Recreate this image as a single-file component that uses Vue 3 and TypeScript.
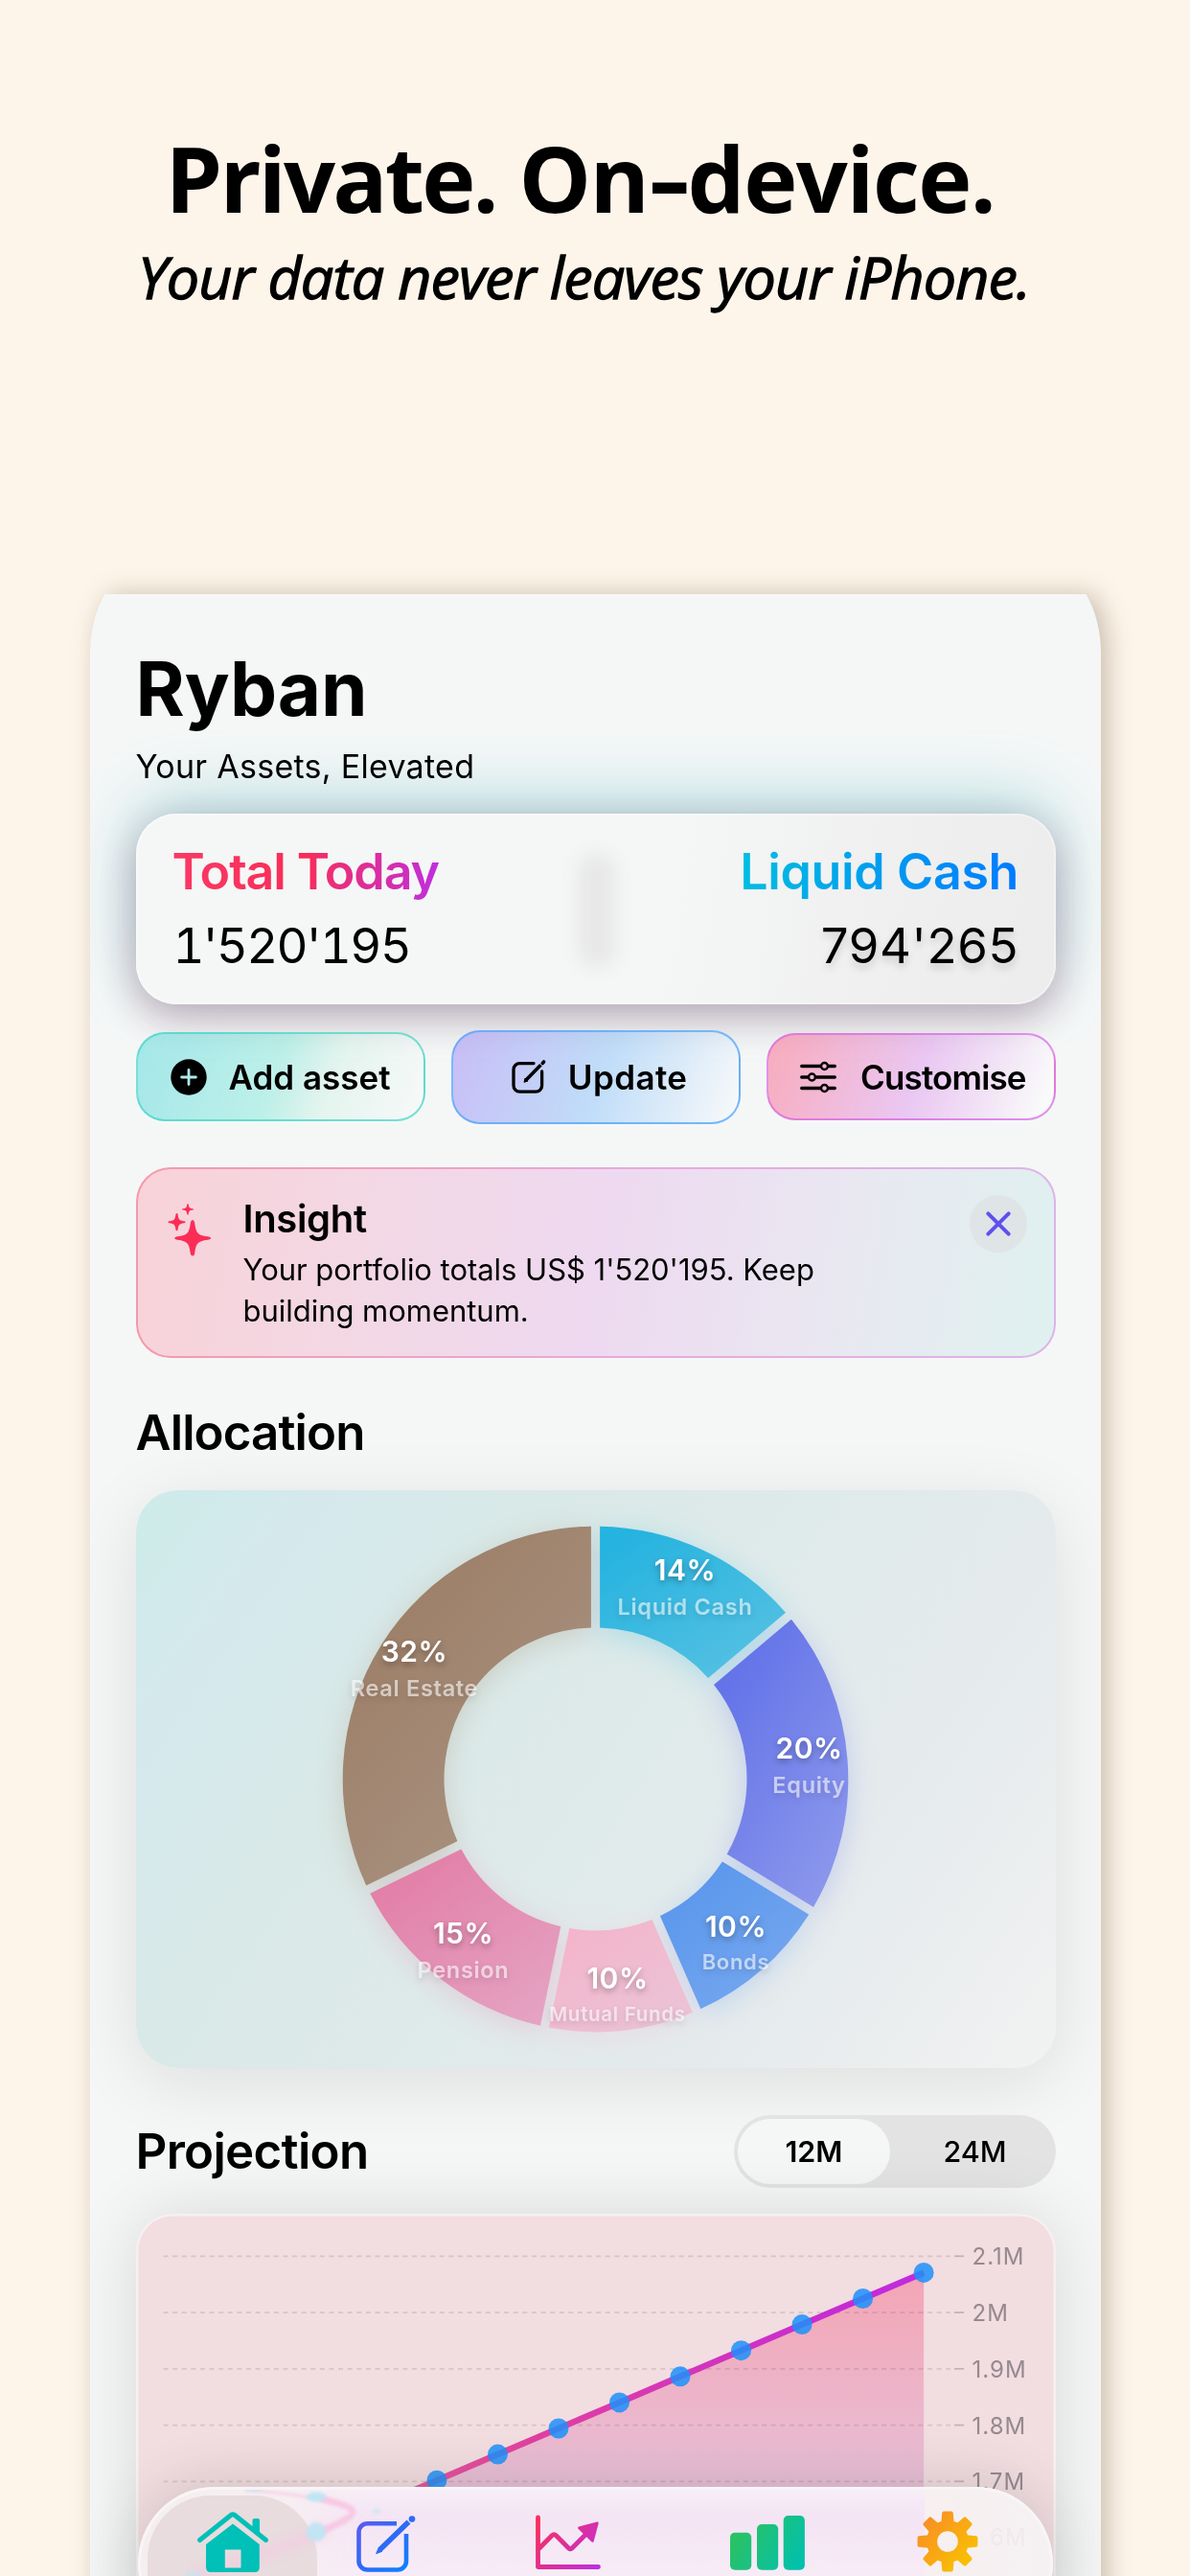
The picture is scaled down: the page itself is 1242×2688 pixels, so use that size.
<script setup lang="ts">
interface Slice {
  name: string
  percent: string
  start: number
  end: number
  from: string
  to: string
  x: number
  y: number
  size: number
}

const slices: Slice[] = [
  { name: 'Liquid Cash', percent: '14%', start: 0, end: 49.8, from: '#25b3df', to: '#56c1e3', x: 573, y: 94, size: 23.5 },
  { name: 'Equity', percent: '20%', start: 49.8, end: 121.4, from: '#6070e8', to: '#8c98ec', x: 702.5, y: 279.5, size: 23.5 },
  { name: 'Bonds', percent: '10%', start: 121.4, end: 156.4, from: '#5896ec', to: '#78a8ef', x: 626, y: 466, size: 22 },
  { name: 'Mutual Funds', percent: '10%', start: 156.4, end: 191.6, from: '#f4b4ca', to: '#ebc3d6', x: 502.5, y: 520, size: 20.5 },
  { name: 'Pension', percent: '15%', start: 191.6, end: 244.1, from: '#e27da6', to: '#e5a2c2', x: 341.5, y: 472.5, size: 23.5 },
  { name: 'Real Estate', percent: '32%', start: 244.1, end: 360, from: '#9b7c64', to: '#aa9584', x: 290.5, y: 178.5, size: 23.5 },
]

const CX = 479.5
const CY = 301.4
const OUTER = 263.8
const INNER = 158
const HALF_GAP = 4.6

function point(radius: number, angle: number): string {
  return `${(CX + radius * Math.sin(angle)).toFixed(2)} ${(CY - radius * Math.cos(angle)).toFixed(2)}`
}

// Each slice keeps parallel edges, so the gap has one width from rim to hole.
function slicePath(s: Slice): string {
  const a = (s.start * Math.PI) / 180
  const b = (s.end * Math.PI) / 180
  const dOut = Math.asin(HALF_GAP / OUTER)
  const dIn = Math.asin(HALF_GAP / INNER)
  return [
    `M${point(OUTER, a + dOut)}`,
    `A${OUTER} ${OUTER} 0 0 1 ${point(OUTER, b - dOut)}`,
    `L${point(INNER, b - dIn)}`,
    `A${INNER} ${INNER} 0 0 0 ${point(INNER, a + dIn)}Z`,
  ].join(' ')
}

const gridLabels = ['2.1M', '2M', '1.9M', '1.8M', '1.7M']
const grid = gridLabels.map((label, i) => ({ label, y: 44.3 + i * 58.75 }))
const dots = Array.from({ length: 11 }, (_, i) => ({ x: 822.1 - i * 63.52, y: 61.4 + i * 27.1 }))
const linePath = 'M' + dots.map((d) => `${d.x.toFixed(1)} ${d.y.toFixed(1)}`).join(' L')
const areaPath = `${linePath} V378 H822.1Z`

const gearPath = (() => {
  const parts: string[] = []
  const at = (r: number, deg: number) => {
    const t = (deg * Math.PI) / 180
    return `${(32 + r * Math.sin(t)).toFixed(2)} ${(32 - r * Math.cos(t)).toFixed(2)}`
  }
  for (let i = 0; i < 8; i++) {
    const c = i * 45
    parts.push(`${i ? 'L' : 'M'}${at(20.5, c - 14)}`, `L${at(30, c - 7.8)}`, `L${at(30, c + 7.8)}`, `L${at(20.5, c + 14)}`)
  }
  return parts.join(' ') + 'Z M44.5 32a12.5 12.5 0 1 0-25 0a12.5 12.5 0 1 0 25 0Z'
})()
</script>

<template>
  <main class="page">
    <header class="headline">
      <h1><span class="w1">Private.</span> <span class="w2">On<span class="dash">-</span>device.</span></h1>
      <p>Your data never leaves your iPhone.</p>
    </header>

    <div class="device-shadow">
      <div class="device">
        <section class="screen">
          <h2 class="brand">Ryban</h2>
          <p class="tagline">Your Assets, Elevated</p>

          <div class="totals">
            <div class="total">
              <strong class="grad-pink">Total Today</strong>
              <span class="tabular">1'520'195</span>
            </div>
            <div class="smudge"></div>
            <div class="total right">
              <strong class="grad-blue">Liquid Cash</strong>
              <span class="soft">794'265</span>
            </div>
          </div>

          <div class="actions">
            <button class="action add">
              <svg width="38" height="38" viewBox="0 0 38 38">
                <path fill-rule="evenodd" d="M19 .3a18.7 18.7 0 1 0 0 37.4a18.7 18.7 0 1 0 0-37.4ZM17.6 11.5q0-1.4 1.4-1.4t1.4 1.4V17.6H26.4q1.4 0 1.4 1.4t-1.4 1.4H20.4V26.5q0 1.4-1.4 1.4t-1.4-1.4V20.4H11.6q-1.4 0-1.4-1.4t1.4-1.4H17.6Z" />
              </svg>
              <span>Add asset</span>
            </button>
            <button class="action update">
              <svg width="38" height="38" viewBox="0 0 38 38" fill="none" stroke="#000">
                <path d="M24 4.6H9.4A6.4 6.4 0 0 0 3 11V27.8a6.4 6.4 0 0 0 6.4 6.4H26.2a6.4 6.4 0 0 0 6.4-6.4V13" stroke-width="3.3" stroke-linecap="round" />
                <path d="M16.5 21.5L31.4 6.3" stroke-width="3.7" />
                <path d="M14 24.3L15 20L18 23Z" fill="#000" stroke-width="1" stroke-linejoin="round" />
                <path d="M33.2 4.5L34.6 3" stroke-width="3.6" stroke-linecap="round" />
              </svg>
              <span>Update</span>
            </button>
            <button class="action customise">
              <svg width="38" height="34" viewBox="0 0 38 34" fill="none" stroke="#000" stroke-width="3.3" stroke-linecap="round">
                <path d="M1.700 5.500H21M30 5.500h6.300M1.700 17H8M17 17h19.300M1.700 28.500H21M30 28.500h6.300" />
                <circle cx="25.5" cy="5.5" r="3.5" stroke-width="2.4" />
                <circle cx="12.4" cy="17" r="3.5" stroke-width="2.4" />
                <circle cx="25.5" cy="28.5" r="3.5" stroke-width="2.4" />
              </svg>
              <span>Customise</span>
            </button>
          </div>

          <div class="insight">
            <svg class="sparkles" width="46" height="55" viewBox="0 0 46 55" fill="#fb2d57">
              <path d="M26 17q1.700 0 2.100 2.500C29.600 30 30.500 33 42 34.300q3.200.4 3.200 1.700T42 37.700C30.500 39 29.600 42 28.100 52.500Q27.700 54.500 26 54.500T23.900 52.500C22.400 42 21.500 39 10 37.700Q7.200 37.300 7.200 36T10 34.300C21.500 33 22.400 30 23.900 19.500Q24.300 17 26 17Z" />
              <path d="M9.500 10q.9 0 1.100 1.200C11.300 16.500 12 17.500 17 18.200q1.600.2 1.600 1T17 20.200C12 20.900 11.300 22 10.600 27Q10.400 28.200 9.500 28.200T8.400 27C7.700 22 7 20.900 2 20.200Q.4 20 .4 19.200T2 18.200C7 17.500 7.700 16.500 8.400 11.200Q8.600 10 9.500 10Z" />
              <path d="M21 0q.6 0 .7.800C22.200 4 22.700 4.700 26 5.200q1 .2 1 .7T26 6.600C22.700 7 22.200 8 21.700 11Q21.600 11.800 21 11.800T20.300 11C19.800 8 19.300 7 16 6.600Q15 6.400 15 5.900T16 5.200C19.300 4.700 19.800 4 20.300.8Q20.400 0 21 0Z" />
            </svg>
            <div class="insight-text">
              <h3>Insight</h3>
              <p>Your portfolio totals US$ 1'520'195. Keep<br />building momentum.</p>
            </div>
            <button class="close">
              <svg width="30" height="30" viewBox="0 0 30 30" stroke="#5e50ee" stroke-width="4" stroke-linecap="round"><path d="M4.300 4.300L25.700 25.700M25.700 4.300L4.300 25.700" /></svg>
            </button>
          </div>

          <h2 class="section-title alloc">Allocation</h2>
          <div class="allocation">
            <svg width="960" height="603" viewBox="0 0 960 603">
              <defs>
                <linearGradient v-for="(s, i) in slices" :id="`slice${i}`" :key="s.name" x1="0" y1="0" x2=".8" y2="1">
                  <stop offset=".1" :stop-color="s.from" />
                  <stop offset="1" :stop-color="s.to" />
                </linearGradient>
                <filter id="glow" x="-20%" y="-20%" width="140%" height="140%"><feGaussianBlur stdDeviation="15" /></filter>
              </defs>
              <g filter="url(#glow)" opacity=".26" transform="translate(0 6)">
                <path v-for="s in slices" :key="s.name" :d="slicePath(s)" :fill="s.from" />
              </g>
              <path v-for="(s, i) in slices" :key="s.name" :d="slicePath(s)" :fill="`url(#slice${i})`" />
              <g v-for="s in slices" :key="s.name" class="slice-label">
                <text class="pct" :x="s.x" :y="s.y">{{ s.percent }}</text>
                <text class="name" :x="s.x" :y="s.y + (s.size < 23 ? 33.5 : 36)" :font-size="s.size">{{ s.name }}</text>
              </g>
            </svg>
          </div>

          <div class="projection-head">
            <h2 class="section-title proj">Projection</h2>
            <div class="segmented">
              <span class="seg active">12M</span>
              <span class="seg">24M</span>
            </div>
          </div>

          <div class="projection">
            <svg width="960" height="378" viewBox="0 0 960 378">
              <defs>
                <linearGradient id="area" gradientUnits="userSpaceOnUse" x1="0" y1="61" x2="0" y2="290">
                  <stop offset="0" stop-color="#f3a5b5" />
                  <stop offset="1" stop-color="#e8c0d8" />
                </linearGradient>
                <linearGradient id="stroke" gradientUnits="userSpaceOnUse" x1="250" y1="0" x2="822" y2="0">
                  <stop offset="0" stop-color="#ec5a94" />
                  <stop offset=".3" stop-color="#e03fa2" />
                  <stop offset=".85" stop-color="#c62bd4" />
                  <stop offset="1" stop-color="#c02be0" />
                </linearGradient>
              </defs>
              <path :d="areaPath" fill="url(#area)" />
              <g v-for="g in grid" :key="g.label">
                <path :d="`M28.5 ${g.y}H850`" stroke="rgba(90,70,80,.17)" stroke-width="1.7" stroke-dasharray="5 4.61" />
                <path :d="`M854 ${g.y}H864`" stroke="rgba(90,70,80,.3)" stroke-width="1.7" />
                <text class="tick" x="872.5" :y="g.y + 9">{{ g.label }}</text>
              </g>
              <path :d="linePath" fill="none" stroke="url(#stroke)" stroke-width="6.5" />
              <circle v-for="d in dots" :key="d.x" :cx="d.x" :cy="d.y" r="10.5" fill="#1c90fa" fill-opacity=".85" />
            </svg>
          </div>
        </section>

        <nav class="tabbar">
          <svg class="glass" width="955" height="93" viewBox="0 0 955 93">
            <defs>
              <linearGradient id="tint" x1="0" y1="0" x2="0" y2="1">
                <stop offset="0" stop-color="#f7eef7" /><stop offset=".35" stop-color="#f4e4f4" /><stop offset="1" stop-color="#f7ecf6" />
              </linearGradient>
              <linearGradient id="tintfade" x1="0" y1="0" x2="1" y2="0">
                <stop offset="0" stop-color="#fff" stop-opacity="0" /><stop offset=".11" stop-color="#fff" /><stop offset="1" stop-color="#fff" />
              </linearGradient>
              <mask id="tintmask"><rect x="160" y="0" width="661" height="93" fill="url(#tintfade)" /></mask>
              <filter id="b1" x="-20%" y="-50%" width="140%" height="200%"><feGaussianBlur stdDeviation="1.6" /></filter>
              <filter id="b2" x="-50%" y="-80%" width="200%" height="260%"><feGaussianBlur stdDeviation="5" /></filter>
            </defs>
            <rect x="160" y="0" width="661" height="93" fill="url(#tint)" mask="url(#tintmask)" />
            <rect x="10" y="9" width="177" height="150" rx="66" fill="#e8dcde" />
            <g fill="none" stroke="#f8c6e2">
              <path d="M112 3C150 6 180 10 206 17" stroke-width="2.5" filter="url(#b1)" opacity=".7" />
              <path d="M190 12C214 18 226 22 224 27C222 33 208 39 190 47" stroke-width="7" filter="url(#b1)" opacity=".9" />
              <path d="M196 45L137 68L60 92" stroke-width="14" filter="url(#b2)" opacity=".45" />
            </g>
            <g fill="#bde6f5" filter="url(#b1)">
              <ellipse cx="186" cy="10.5" rx="10" ry="5" /><circle cx="186" cy="47" r="10" opacity=".9" />
              <ellipse cx="249" cy="25.5" rx="4.5" ry="2.5" opacity=".6" /><ellipse cx="121" cy="3.4" rx="9" ry="1.5" opacity=".8" />
              <ellipse cx="58" cy="93" rx="9" ry="5" opacity=".5" />
            </g>
            <text class="tick ghost" x="889" y="61">6M</text>
          </svg>
          <ul>
            <li class="home">
              <svg width="76" height="66" viewBox="0 0 76 66" fill="#00c0b7">
                <path d="M3.500 31.500L36 5.500Q38 4 40 5.500L72.500 31.500" fill="none" stroke="#00c0b7" stroke-width="5" stroke-linecap="round" stroke-linejoin="round" />
                <path d="M58.500 11q0-2 2-2H64q2 0 2 2V26L58.500 20Z" />
                <path fill-rule="evenodd" d="M38 14.500L65.800 36V60q0 5-5 5H15q-5 0-5-5V36ZM29.800 41.500V60.500H46.500V41.500Z" />
              </svg>
            </li>
            <li class="edit">
              <svg width="64" height="62" viewBox="0 0 64 62" fill="none">
                <defs><linearGradient id="edit" gradientUnits="userSpaceOnUse" x1="2" y1="8" x2="56" y2="60"><stop offset="0" stop-color="#5b5bf0" /><stop offset=".5" stop-color="#2d6bf6" /><stop offset="1" stop-color="#0a84ff" /></linearGradient></defs>
                <path d="M43 9.200H12.500A9 9 0 0 0 3.500 18.200V48.500A9 9 0 0 0 12.500 57.500H44A9 9 0 0 0 53 48.500V20" stroke="url(#edit)" stroke-width="4.6" />
                <path d="M25.500 36.500L55.500 7.500" stroke="#2d6bf6" stroke-width="5.6" />
                <path d="M21.700 40.700L24.200 34.500L28 38.200Z" fill="#2d6bf6" stroke="#2d6bf6" stroke-width="1" stroke-linejoin="round" />
                <path d="M53.300 2.300L60.500 9.500" stroke="#f5e6f5" stroke-width="2.2" />
                <circle cx="59" cy="4.6" r="3.3" fill="#2d6bf6" />
              </svg>
            </li>
            <li class="trend">
              <svg width="70" height="60" viewBox="0 0 70 60" fill="none" stroke="url(#trend)" stroke-width="4.8" stroke-linecap="round" stroke-linejoin="round">
                <defs><linearGradient id="trend" gradientUnits="userSpaceOnUse" x1="3" y1="6" x2="66" y2="58"><stop offset="0" stop-color="#fa2f5a" /><stop offset=".5" stop-color="#dc2f9c" /><stop offset="1" stop-color="#bf2fe0" /></linearGradient></defs>
                <path d="M3.500 4V55.500H66.500M5 36L18 22.800Q20.200 20.700 22.400 22.800L35.500 36Q37.200 37.600 39 36L55 20" />
                <path d="M46.300 14.800L65.500 9.800L60.500 28.500Z" fill="url(#trend)" stroke-width="2.5" />
              </svg>
            </li>
            <li class="bars">
              <svg width="78" height="57" viewBox="0 0 78 57" fill="url(#bars)">
                <defs><linearGradient id="bars" gradientUnits="userSpaceOnUse" x1="0" y1="10" x2="74" y2="57"><stop offset="0" stop-color="#2fc25b" /><stop offset="1" stop-color="#00c0b0" /></linearGradient></defs>
                <rect x="0" y="17.7" width="22.2" height="39" rx="5" /><rect x="28" y="9" width="22.2" height="47.7" rx="5" /><rect x="55.7" y="0" width="22.2" height="56.7" rx="5" />
              </svg>
            </li>
            <li class="gear">
              <svg width="64" height="64" viewBox="0 0 64 64">
                <defs><linearGradient id="gear" gradientUnits="userSpaceOnUse" x1="6" y1="8" x2="58" y2="56"><stop offset="0" stop-color="#f98d25" /><stop offset="1" stop-color="#f8c400" /></linearGradient></defs>
                <path :d="gearPath" fill="url(#gear)" fill-rule="evenodd" stroke="url(#gear)" stroke-width="3.4" stroke-linejoin="round" />
              </svg>
            </li>
          </ul>
        </nav>
      </div>
    </div>
  </main>
</template>

<style>
body {
  background: #fdf5ea;
}
</style>

<style scoped>
* {
  box-sizing: border-box;
  margin: 0;
  padding: 0;
}
.page {
  width: 1242px;
  height: 2688px;
  overflow: hidden;
  background: #fdf5ea;
  color: #000;
  font-family: Inter, 'Liberation Sans', sans-serif;
}
svg {
  display: block;
}
.headline {
  height: 620px;
  padding-top: 125px;
  font-family: 'Open Sans', 'Noto Sans', sans-serif;
  text-align: center;
  white-space: nowrap;
}
.headline h1 {
  margin-right: 31px;
  font-size: 95px;
  line-height: 120px;
  font-weight: 700;
  word-spacing: -1px;
}
.w1 {
  letter-spacing: -2.8px;
}
.w2 {
  letter-spacing: -1.5px;
}
.dash {
  display: inline-block;
  margin: 0 6px;
  transform: scaleX(1.42);
}
.headline p {
  margin: 4px 23px 0 0;
  font-size: 61px;
  line-height: 80px;
  font-style: italic;
  font-weight: 500;
  letter-spacing: -0.9px;
  -webkit-text-stroke: 1.3px #000;
}
.device-shadow {
  margin-left: 94px;
  width: 1055px;
  height: 2068px;
  filter: drop-shadow(7px 0 13px rgba(70, 45, 20, 0.27));
}
.device {
  position: relative;
  height: 2140px;
  background: #f5f7f7;
  clip-path: path('M15.500 0H1039.500C1050 18 1055 40 1055 62V2140H0V62C0 40 5 18 15.500 0Z');
}
.screen {
  padding: 60px 47px 0 47.5px;
}
.brand {
  font-size: 78px;
  line-height: 78px;
  font-weight: 700;
}
.tagline {
  font-size: 34px;
  line-height: 40px;
  margin-top: 21.5px;
  letter-spacing: 0.28px;
}
.totals {
  margin-top: 29px;
  height: 199.5px;
  padding: 31px 39px 0 38px;
  display: flex;
  border-radius: 42px;
  background: linear-gradient(100deg, #f5f7f7 56%, #f0f0f0 78%, #ececec);
  box-shadow:
    inset 0 0 0 2px rgba(255, 255, 255, 0.3),
    0 11px 36px rgba(50, 50, 80, 0.24),
    0 14px 44px rgba(255, 50, 100, 0.14),
    0 -14px 70px rgba(30, 165, 175, 0.32);
}
.total {
  display: flex;
  flex: 1;
  flex-direction: column;
  gap: 17.5px;
  align-items: flex-start;
  font-size: 51px;
  line-height: 60px;
  white-space: nowrap;
}
.total.right {
  align-items: flex-end;
  letter-spacing: 0.6px;
}
.total strong {
  font-weight: 600;
  font-size: 52px;
  background-clip: text;
  -webkit-background-clip: text;
  color: transparent;
}
.total .grad-pink {
  letter-spacing: -1.15px;
  background-image: linear-gradient(95deg, #f93a66, #fa2c57 48%, #bf2fe0);
}
.total .grad-blue {
  letter-spacing: -0.4px;
  background-image: linear-gradient(95deg, #00bfe0, #007aff);
}
.tabular {
  margin-left: 1px;
  font-feature-settings: 'tnum';
  letter-spacing: -1.6px;
}
.soft {
  text-shadow: 0 5px 8px rgba(0, 0, 0, 0.16);
}
.smudge {
  width: 42px;
  height: 122px;
  margin: 9px 0 0 3px;
  border-radius: 21px;
  background: #e8e8e8;
  filter: blur(9px);
}
.actions {
  display: flex;
  justify-content: space-between;
  align-items: center;
  height: 98px;
  margin-top: 26.5px;
}
.action {
  display: flex;
  align-items: center;
  width: 302px;
  height: 93px;
  border-radius: 30px;
  border: 2.5px solid;
  font: 600 35px/40px Inter, sans-serif;
  color: #000;
  white-space: nowrap;
}
.add {
  padding-left: 34px;
  gap: 23px;
  border-color: rgba(64, 212, 196, 0.7);
  background: linear-gradient(110deg, rgba(90, 216, 220, 0.52), rgba(120, 230, 215, 0.45) 48%, rgba(200, 240, 225, 0.4) 66%, rgba(255, 255, 255, 0.3));
}
.update {
  height: 98px;
  padding-left: 60px;
  gap: 22px;
  border-color: rgba(80, 165, 250, 0.75);
  background: linear-gradient(110deg, rgba(170, 150, 245, 0.6), rgba(140, 195, 250, 0.5) 52%, rgba(255, 255, 255, 0.35));
  letter-spacing: 0.4px;
}
.customise {
  height: 91px;
  padding-left: 33px;
  gap: 25px;
  border-color: rgba(214, 100, 228, 0.7);
  background: linear-gradient(110deg, rgba(252, 110, 140, 0.55), rgba(220, 140, 235, 0.45) 52%, rgba(255, 255, 255, 0.4) 95%);
  letter-spacing: -0.85px;
}
.insight {
  display: flex;
  align-items: flex-start;
  margin-top: 45px;
  height: 199px;
  padding: 27.5px 28px 0 31px;
  border-radius: 36px;
  border: 2px solid transparent;
  background:
    linear-gradient(100deg, #f8d2d8, #f3d8e4 25%, #eed9f0 50%, #e9e7f1 75%, #dff1ef) padding-box,
    linear-gradient(90deg, #f598aa, #e9a8d8 50%, #dcb4ea) border-box;
}
.sparkles {
  margin-top: 9px;
}
.insight-text {
  flex: 1;
  margin-left: 33px;
}
.insight h3 {
  font-size: 40px;
  line-height: 50px;
  font-weight: 600;
  letter-spacing: -0.35px;
}
.insight p {
  font-size: 31px;
  line-height: 43px;
  margin-top: 5.5px;
  letter-spacing: -0.03px;
  white-space: nowrap;
}
.close {
  display: grid;
  place-items: center;
  width: 60px;
  height: 60px;
  border: 0;
  border-radius: 50%;
  background: #dfe4e7;
}
.section-title {
  font-size: 51px;
  line-height: 60px;
  font-weight: 600;
}
.alloc {
  margin-top: 48.5px;
  letter-spacing: -0.9px;
}
.proj {
  letter-spacing: -0.7px;
}
.allocation {
  margin-top: 30px;
  height: 603px;
  border-radius: 44px;
  background: linear-gradient(125deg, #cdebe9, #d5e9ed 14%, #d9e9e7 32%, #dfeaea 52%, #e6ebed 76%, #f2f2f2);
  box-shadow: 0 16px 72px rgba(20, 0, 0, 0.1);
}
.slice-label text {
  text-anchor: middle;
}
.pct {
  font-size: 30px;
  font-weight: 600;
  letter-spacing: 0.5px;
  fill: #fff;
  filter: drop-shadow(0 3px 3px rgba(0, 0, 0, 0.3));
}
.name {
  font-weight: 600;
  letter-spacing: 0.7px;
  fill: rgba(255, 255, 255, 0.6);
  filter: drop-shadow(0 3px 3px rgba(0, 0, 0, 0.2));
}
.projection-head {
  display: flex;
  justify-content: space-between;
  align-items: center;
  margin-top: 49px;
  height: 76px;
}
.segmented {
  display: flex;
  width: 336px;
  height: 76px;
  padding: 4px;
  border-radius: 38px;
  background: #e3e3e3;
}
.seg {
  width: 159px;
  height: 68px;
  border-radius: 34px;
  font-size: 30.5px;
  line-height: 68px;
  font-weight: 500;
  text-align: center;
}
.seg.active {
  background: #f5f6f6;
  font-weight: 600;
}
.seg:last-child {
  width: 169px;
  padding-left: 8px;
}
.projection {
  position: relative;
  margin-top: 26.5px;
  height: 460px;
  border-radius: 38px;
  background: #f2dde1;
  box-shadow:
    inset 0 0 0 2.5px #f6f0f2,
    0 0 72px rgba(0, 0, 0, 0.12);
}
.tick {
  font-size: 24px;
  letter-spacing: 1px;
  fill: #958a90;
}
.ghost {
  fill: rgba(120, 100, 110, 0.045);
}
.tabbar {
  position: absolute;
  left: 49.5px;
  top: 1975px;
  width: 955px;
  height: 160px;
  border-radius: 80px;
  background: linear-gradient(90deg, #f5eeef, #f7eef2 20%, #f7eff0 86%, #f5f1f3);
  box-shadow: 0 -2px 60px rgba(60, 70, 60, 0.2);
}
.tabbar::after {
  content: '';
  position: absolute;
  inset: 0;
  border-radius: 80px;
  box-shadow: inset 0 0 0 3px rgba(248, 246, 248, 0.85);
}
.glass {
  position: absolute;
  left: 0;
  top: 0;
  border-radius: 80px 80px 0 0;
}
.tabbar ul {
  position: relative;
  display: flex;
  align-items: flex-start;
  list-style: none;
  padding-left: 61.5px;
}
.home {
  margin-top: 24px;
}
.edit {
  margin: 29px 0 0 89.5px;
}
.trend {
  margin: 27.5px 0 0 123px;
}
.bars {
  margin: 29.5px 0 0 134px;
}
.gear {
  margin: 25px 0 0 117px;
}
</style>
